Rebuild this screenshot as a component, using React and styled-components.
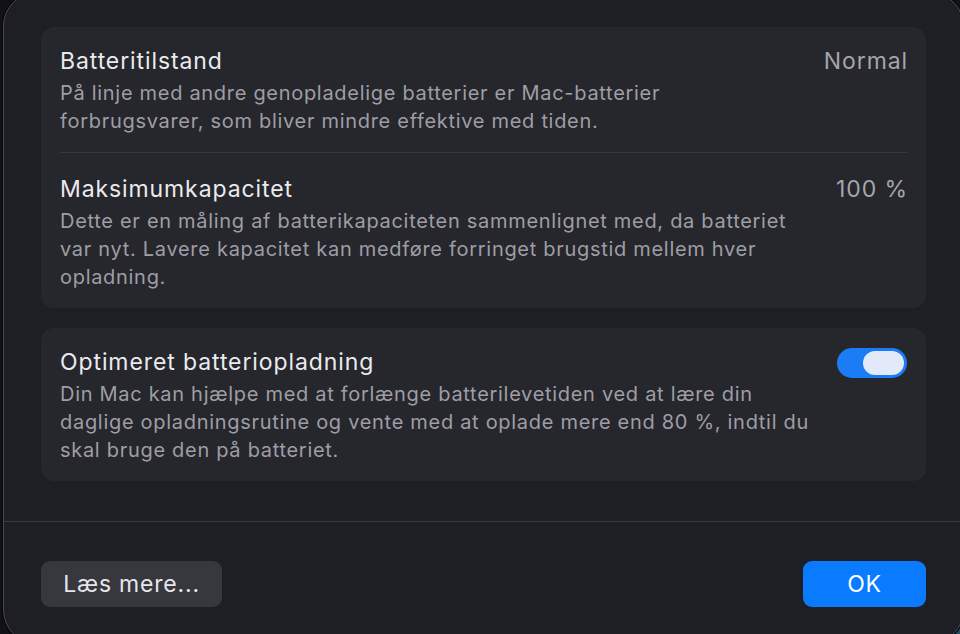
import React from "react";
import styled, { createGlobalStyle } from "styled-components";

const GlobalStyle = createGlobalStyle`
  html, body {
    margin: 0;
    padding: 0;
    height: 100%;
    overflow: hidden;
  }
  body {
    background: radial-gradient(circle at 100% 100%, #1f4d6e 0, #15222d 60px, #121216 140px);
    font-family: Inter, "Noto Sans", "Liberation Sans", sans-serif;
    -webkit-font-smoothing: antialiased;
  }
`;

const Sheet = styled.div`
  box-sizing: border-box;
  width: 961px;
  height: 652px;
  margin: -8px 0 0 3px;
  padding: 34px 37px 0;
  background: #1e1e25;
  border: 1px solid #4a4a51;
  border-radius: 34px;
  box-shadow: 0 0 0 1px #050507;
  display: flex;
  flex-direction: column;
`;

const Card = styled.div`
  background: #26262d;
  border-radius: 13px;
  padding: 0 19px;
  margin-bottom: ${(p) => p.$gap || 0}px;
`;

const Row = styled.div`
  display: flex;
  align-items: flex-start;
  justify-content: space-between;
  padding: ${(p) => p.$pad};
  border-top: ${(p) => (p.$divided ? "1px solid #393940" : "none")};
`;

const TextCol = styled.div`
  display: flex;
  flex-direction: column;
  gap: 4px;
`;

const Title = styled.div`
  color: #ebebee;
  font-size: 23px;
  line-height: 28px;
  letter-spacing: 0.9px;
`;

const Desc = styled.div`
  color: #9e9ea4;
  font-size: 20px;
  line-height: 28px;
  letter-spacing: 0.7px;
  white-space: nowrap;
`;

const Value = styled.div`
  color: #a5a5ab;
  font-size: 23px;
  line-height: 28px;
  letter-spacing: 0.9px;
  margin-right: -1px;
`;

const Toggle = styled.div`
  box-sizing: border-box;
  width: 70px;
  height: 30px;
  border-radius: 15px;
  background: #1b7df6;
  padding: 3px 3px 3px 26px;
  display: flex;
`;

const Knob = styled.div`
  flex: 1;
  border-radius: 13px;
  background: #e2eaf9;
`;

const Divider = styled.div`
  height: 1px;
  background: #3a3a41;
  margin: 40px -37px 0;
`;

const Footer = styled.div`
  display: flex;
  justify-content: space-between;
  padding-top: 39px;
`;

const Button = styled.button`
  height: 46px;
  min-width: ${(p) => p.$width}px;
  padding: 0 20px;
  border: none;
  border-radius: 9px;
  font-family: Inter, "Noto Sans", "Liberation Sans", sans-serif;
  font-size: 23px;
  letter-spacing: 0.8px;
  color: ${(p) => (p.$primary ? "#ffffff" : "#e6e6ea")};
  background: ${(p) => (p.$primary ? "#0a7bff" : "#37373e")};
`;

function Lines({ lines }) {
  return lines.map((l) => <Desc key={l}>{l}</Desc>);
}

export default function App() {
  return (
    <>
      <GlobalStyle />
      <Sheet>
        <Card $gap={20}>
          <Row $pad="20px 0 17px">
            <TextCol>
              <Title>Batteritilstand</Title>
              <div>
                <Lines
                  lines={[
                    "På linje med andre genopladelige batterier er Mac-batterier",
                    "forbrugsvarer, som bliver mindre effektive med tiden.",
                  ]}
                />
              </div>
            </TextCol>
            <Value>Normal</Value>
          </Row>
          <Row $divided $pad="22px 0 17px">
            <TextCol>
              <Title>Maksimumkapacitet</Title>
              <div>
                <Lines
                  lines={[
                    "Dette er en måling af batterikapaciteten sammenlignet med, da batteriet",
                    "var nyt. Lavere kapacitet kan medføre forringet brugstid mellem hver",
                    "opladning.",
                  ]}
                />
              </div>
            </TextCol>
            <Value>100 %</Value>
          </Row>
        </Card>
        <Card>
          <Row $pad="20px 0 17px">
            <TextCol>
              <Title>Optimeret batteriopladning</Title>
              <div>
                <Lines
                  lines={[
                    "Din Mac kan hjælpe med at forlænge batterilevetiden ved at lære din",
                    "daglige opladningsrutine og vente med at oplade mere end 80 %, indtil du",
                    "skal bruge den på batteriet.",
                  ]}
                />
              </div>
            </TextCol>
            <Toggle>
              <Knob />
            </Toggle>
          </Row>
        </Card>
        <Divider />
        <Footer>
          <Button $width={181}>Læs mere...</Button>
          <Button $primary $width={123}>OK</Button>
        </Footer>
      </Sheet>
    </>
  );
}
